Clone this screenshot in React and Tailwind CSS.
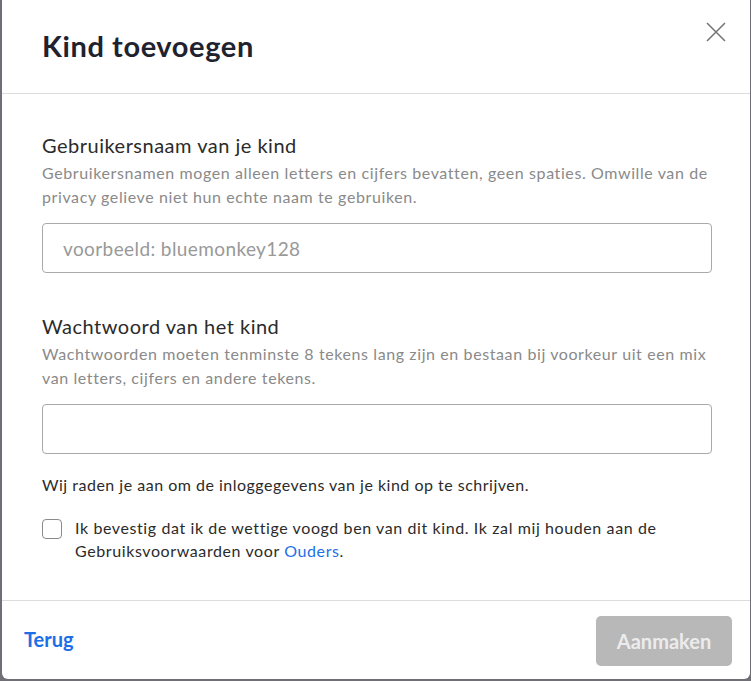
import React, { useState } from 'react';

const App = () => {
  const [username, setUsername] = useState('');
  const [password, setPassword] = useState('');
  const [confirmed, setConfirmed] = useState(false);

  const canCreate = confirmed && username.length > 0 && password.length >= 8;

  return (
    <div
      className="w-[751px] h-[681px] bg-[#6f6f75] overflow-hidden"
      style={{ fontFamily: 'Lato, "Open Sans", sans-serif' }}
    >
      <div className="ml-[2px] w-[748px] h-[679px] bg-white rounded-b-md flex flex-col">
        {/* Header */}
        <div className="h-[94px] border-b border-[#dcdcdc] flex items-start justify-between pl-10 pr-5">
          <h1 className="mt-[26px] text-[29px] leading-[40px] font-bold tracking-[0.6px] text-[#1f2330]">Kind toevoegen</h1>
          <button className="mt-[18px] w-[28px] h-[28px] flex items-center justify-center text-[#777]">
            <svg width="20" height="20" viewBox="0 0 20 20" fill="none" stroke="currentColor" strokeWidth="1.6">
              <path d="M1 1L19 19M19 1L1 19" />
            </svg>
          </button>
        </div>

        {/* Body */}
        <div className="flex-1 px-10 pt-[38px]">
          <label className="block text-[20px] leading-[26px] tracking-[0.5px] text-[#2b2b2b]">Gebruikersnaam van je kind</label>
          <p className="mt-[3px] text-[16px] leading-[24px] tracking-[0.6px] text-[#8a8a8a]">
            Gebruikersnamen mogen alleen letters en cijfers bevatten, geen spaties. Omwille van de privacy gelieve niet hun echte naam te gebruiken.
          </p>
          <input
            type="text"
            value={username}
            onChange={(e) => setUsername(e.target.value)}
            placeholder="voorbeeld: bluemonkey128"
            className="mt-[14px] block w-[670px] h-[50px] border border-[#a9a9a9] rounded-[4px] px-5 text-[19px] tracking-[0.4px] text-[#333] placeholder:text-[#999] outline-none"
          />

          <label className="mt-[40px] block text-[20px] leading-[26px] tracking-[0.5px] text-[#2b2b2b]">Wachtwoord van het kind</label>
          <p className="mt-[3px] text-[16px] leading-[24px] tracking-[0.6px] text-[#8a8a8a]">
            Wachtwoorden moeten tenminste 8 tekens lang zijn en bestaan bij voorkeur uit een mix van letters, cijfers en andere tekens.
          </p>
          <input
            type="password"
            value={password}
            onChange={(e) => setPassword(e.target.value)}
            className="mt-[14px] block w-[670px] h-[50px] border border-[#a9a9a9] rounded-[4px] px-5 text-[19px] text-[#333] outline-none"
          />

          <p className="mt-[19px] text-[16px] leading-[24px] tracking-[0.5px] text-[#2b2b2b]">
            Wij raden je aan om de inloggegevens van je kind op te schrijven.
          </p>

          <label className="mt-[19px] flex items-start gap-[13px] cursor-pointer">
            <span
              onClick={() => setConfirmed(!confirmed)}
              className="mt-[3px] w-[20px] h-[20px] shrink-0 rounded-[4px] border border-[#8a8a8a] bg-white"
            />
            <span className="text-[16px] leading-[23px] tracking-[0.6px] text-[#2b2b2b]">
              Ik bevestig dat ik de wettige voogd ben van dit kind. Ik zal mij houden aan de Gebruiksvoorwaarden voor{' '}
              <a href="#" className="text-[#1d6fe8]">Ouders</a>.
            </span>
          </label>
        </div>

        {/* Footer */}
        <div className="h-[79px] border-t border-[#dcdcdc] flex items-start justify-between pl-[22px] pr-[18px]">
          <button className="mt-[24px] text-[20px] leading-[28px] font-bold text-[#1d6fe8]">Terug</button>
          <button
            disabled={!canCreate}
            className="mt-[15px] w-[136px] h-[50px] rounded-[5px] bg-[#b8b8b8] text-[20px] font-bold text-[#ececec]"
          >
            Aanmaken
          </button>
        </div>
      </div>
    </div>
  );
};

export default App;
